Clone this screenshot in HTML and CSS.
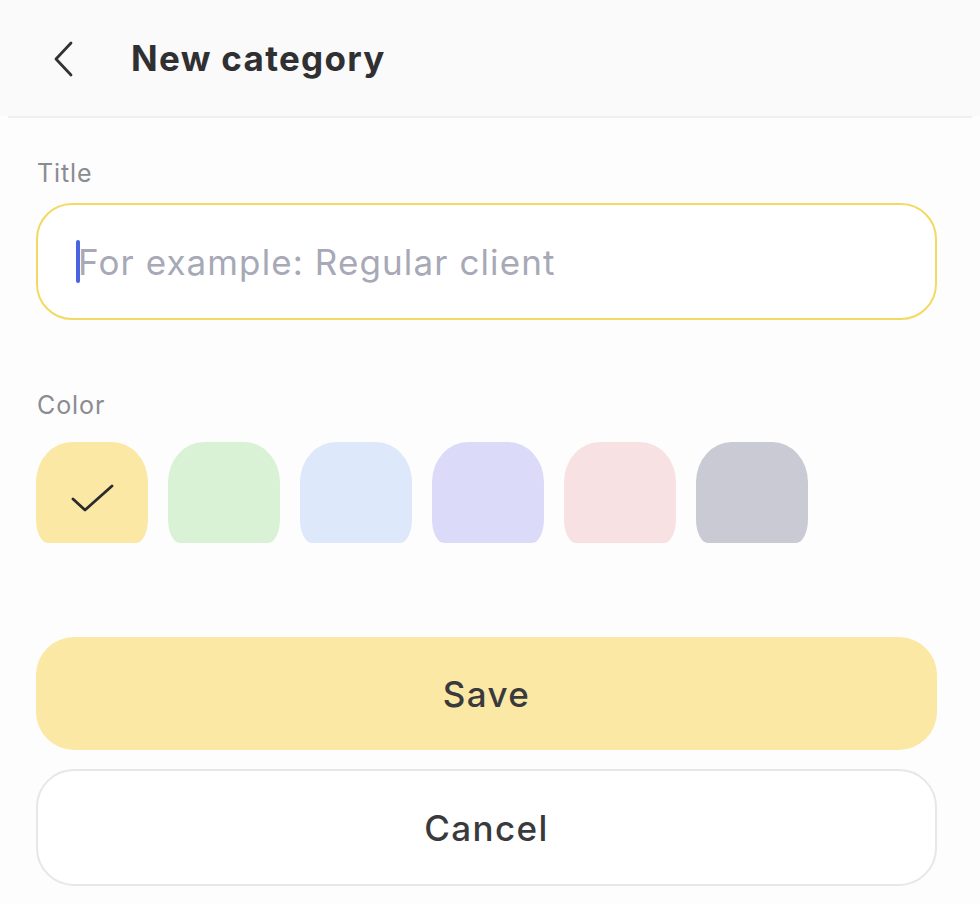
FILE: index.html
```html
<!DOCTYPE html>
<html>
<head>
<meta charset="utf-8">
<link rel="stylesheet" href="styles.css">
</head>
<body>
<div class="screen">
  <header class="header">
    <svg class="back" width="22" height="36" viewBox="0 0 22 36"><path d="M18 2 L3 18 L18 34" fill="none" stroke="#333" stroke-width="2.8" stroke-linecap="round" stroke-linejoin="round"/></svg>
    <h1 class="title">New category</h1>
  </header>
  <div class="divider"></div>
  <main class="content">
    <div class="label">Title</div>
    <div class="input"><span class="caret"></span><span class="placeholder">For example: Regular client</span></div>
    <div class="label color-label">Color</div>
    <div class="swatches">
      <div class="swatch yellow"><svg width="44" height="30" viewBox="0 0 44 30"><path d="M2 15 L14 26 L41 2" fill="none" stroke="#2b2b2b" stroke-width="2.8" stroke-linecap="round" stroke-linejoin="round"/></svg></div>
      <div class="swatch green"></div>
      <div class="swatch blue"></div>
      <div class="swatch purple"></div>
      <div class="swatch pink"></div>
      <div class="swatch gray"></div>
    </div>
    <button class="btn save">Save</button>
    <button class="btn cancel">Cancel</button>
  </main>
</div>
</body>
</html>
```
FILE: styles.css
```css
html, body {
  margin: 0;
  padding: 0;
  background: #fdfdfd;
}
body {
  font-family: Inter, "Noto Sans", sans-serif;
  color: #333;
}
.screen {
  width: 980px;
  height: 904px;
  overflow: hidden;
}
.header {
  height: 116px;
  display: flex;
  align-items: center;
  padding-left: 53px;
  box-sizing: border-box;
  background: #fafafa;
}
.back {
  display: block;
  margin-top: 2px;
}
.title {
  margin: 0 0 0 56px;
  font-size: 35px;
  font-weight: 700;
  color: #303033;
  letter-spacing: 1.3px;
}
.divider {
  height: 2px;
  margin: 0 8px;
  background: #efefef;
}
.content {
  padding: 40px 43px 0 36px;
  display: flex;
  flex-direction: column;
}
.label {
  font-size: 25px;
  color: #8b8b90;
  margin-left: 1px;
  line-height: 30px;
  letter-spacing: 0.9px;
}
.input {
  margin-top: 15px;
  height: 117px;
  box-sizing: border-box;
  border: 2px solid #f2da62;
  border-radius: 36px;
  background: #fff;
  display: flex;
  align-items: center;
  padding-left: 38px;
}
.caret {
  width: 4px;
  height: 43px;
  border-radius: 2px;
  background: #4a63e0;
  margin-right: -2px;
}
.placeholder {
  font-size: 35px;
  color: #a7a9b7;
  letter-spacing: 1.1px;
}
.color-label {
  margin-top: 70px;
}
.swatches {
  margin-top: 22px;
  display: flex;
  gap: 20px;
}
.swatch {
  width: 112px;
  height: 101px;
  border-radius: 36px 36px 12px 12px / 40px 40px 24px 24px;
  display: flex;
  align-items: center;
  justify-content: center;
}
.swatch svg { margin-top: 12px; margin-left: 2px; }
.yellow { background: #fbe8a5; }
.green { background: #d9f2d5; }
.blue { background: #dde8fb; }
.purple { background: #dcdaf9; }
.pink { background: #f8e1e3; }
.gray { background: #c9cad3; }
.btn {
  font-family: Inter, "Noto Sans", sans-serif;
  font-size: 35px;
  font-weight: 500;
  color: #3a3a3c;
  letter-spacing: 1.4px;
  border-radius: 38px;
  box-sizing: border-box;
  width: 100%;
  display: flex;
  align-items: center;
  justify-content: center;
}
.save {
  margin-top: 94px;
  height: 113px;
  background: #fbe8a5;
  border: none;
}
.cancel {
  margin-top: 19px;
  height: 117px;
  background: #fff;
  border: 2px solid #e7e7eb;
}
```
